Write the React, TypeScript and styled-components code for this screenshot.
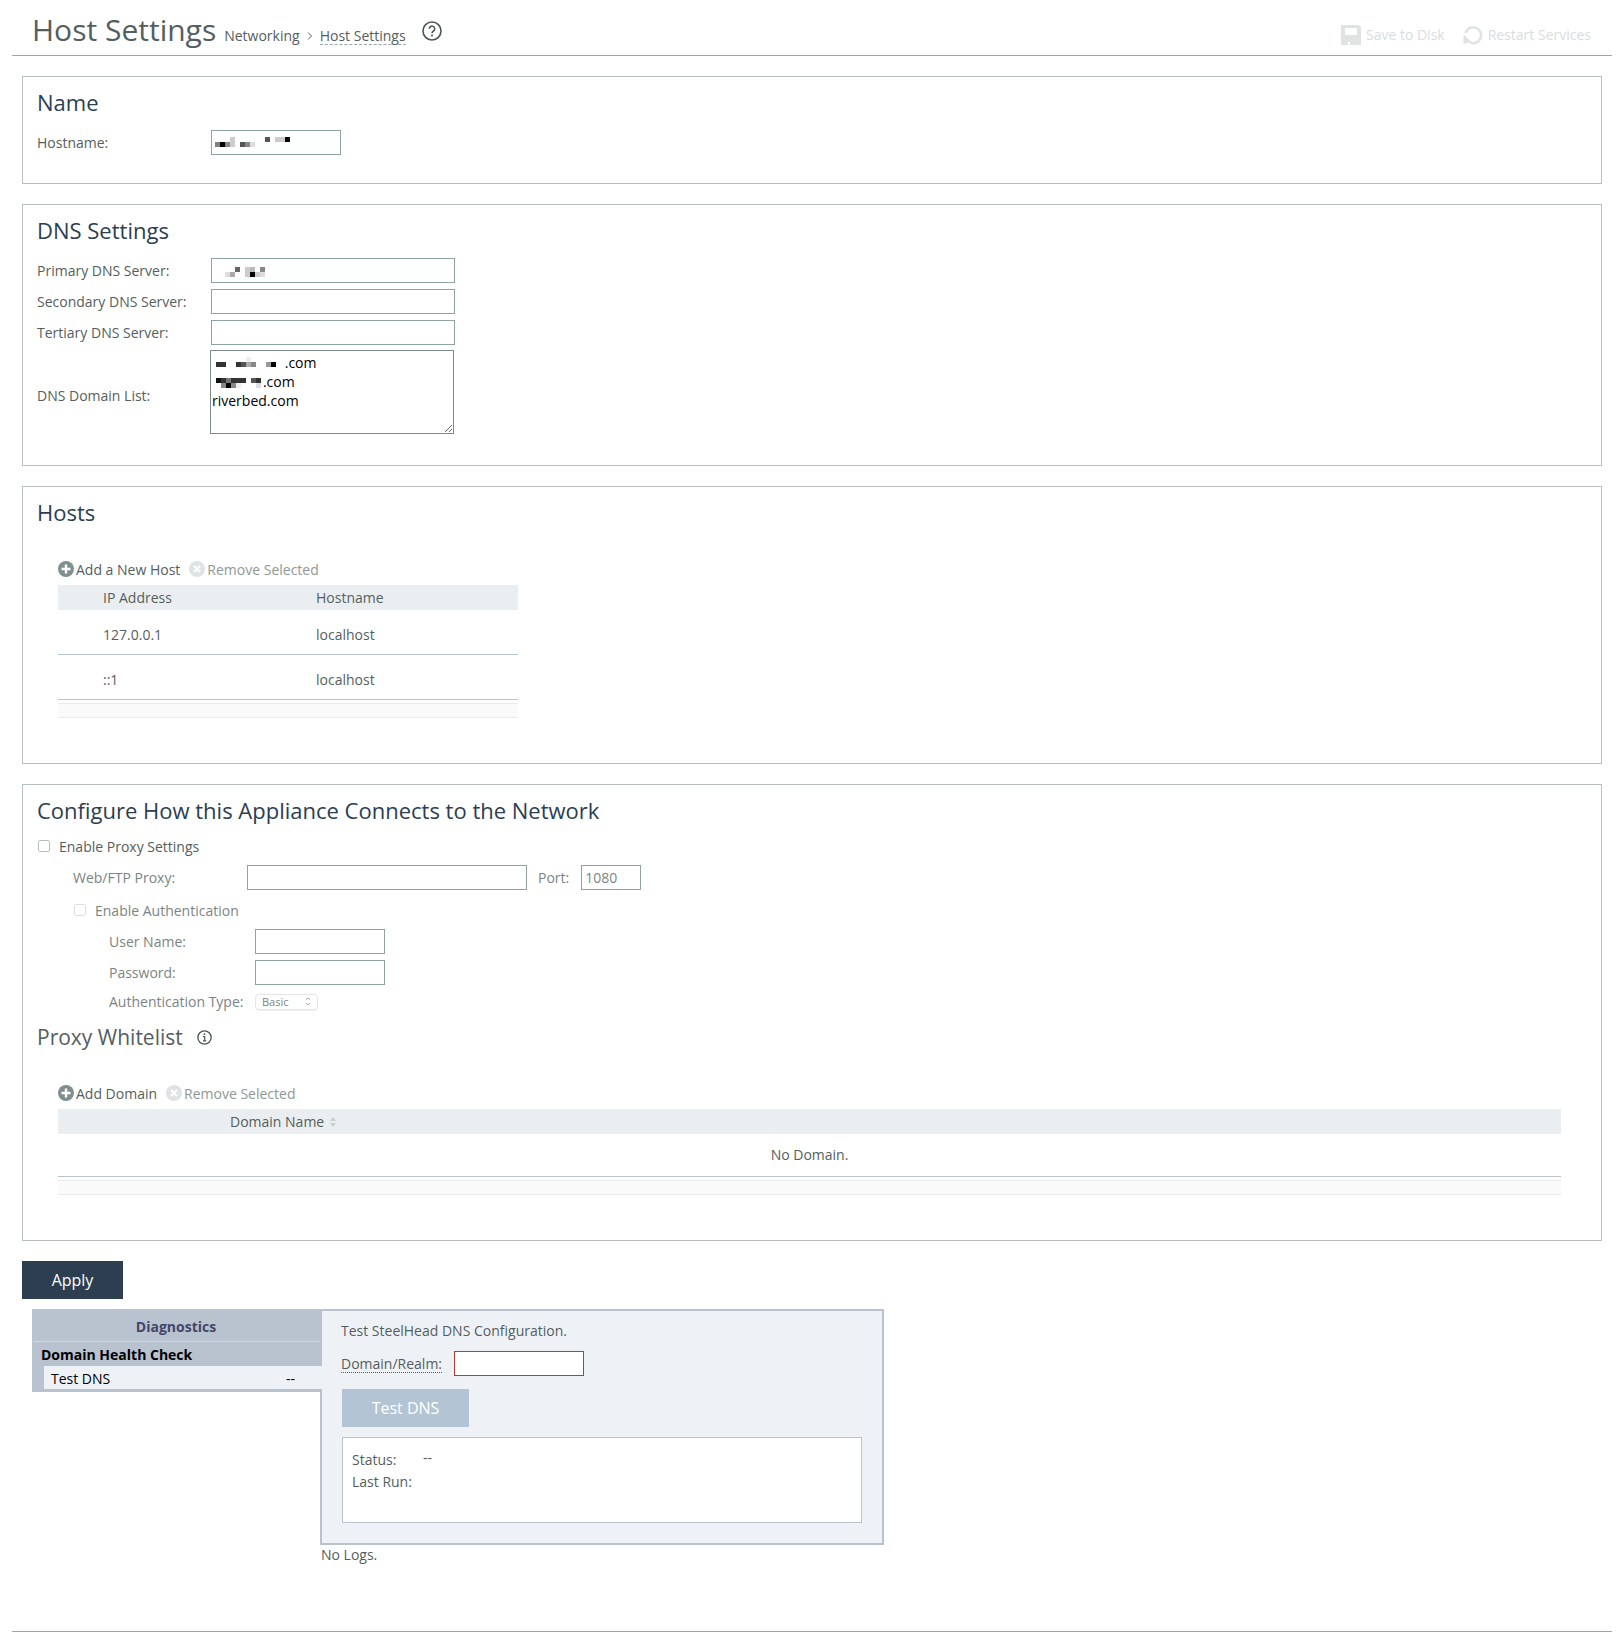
import React from "react";
import styled, { createGlobalStyle } from "styled-components";

const Global = createGlobalStyle`
  html, body { margin: 0; padding: 0; background: #fff; }
  body { font-family: "Open Sans", "Liberation Sans", sans-serif; font-size: 14px; color: #555e5e; }
`;

const Page = styled.div`
  width: 1623px;
  box-sizing: border-box;
  padding: 0 11px 0 12px;
`;
const Header = styled.header`
  display: flex;
  align-items: center;
  height: 55px;
  border-bottom: 1px solid #9aa5a5;
  padding: 0 21px 0 20px;
`;
const Title = styled.h1`
  margin: 5px 0 0;
  font-size: 30px;
  font-weight: 400;
  line-height: 40px;
  color: #555e5e;
`;
const Crumbs = styled.div`
  display: flex;
  align-items: center;
  margin-left: 8px;
  margin-top: 16px;
  font-size: 14px;
  color: #555e5e;
`;
const Sep = styled.span`
  margin: 0 7px;
  display: inline-flex;
`;
const Current = styled.span`
  border-bottom: 1px dashed #9aa5a5;
  line-height: 17px;
  margin-top: 1px;
`;
const Help = styled.span`
  display: inline-flex;
  margin-left: 16px;
  margin-top: 7px;
`;
const Actions = styled.div`
  margin-left: auto;
  display: flex;
  align-items: center;
  gap: 18px;
  margin-top: 14px;
`;
const Action = styled.span`
  display: flex;
  align-items: center;
  gap: 5px;
  color: #d9dddd;
  font-size: 14px;
`;
const Panel = styled.section<{ $bottom: number }>`
  margin: 20px 10px 0;
  border: 1px solid #b8bfc4;
  padding: 11px 14px ${(p) => p.$bottom}px;
`;
const PanelTitle = styled.h2<{ $muted?: boolean }>`
  margin: 0;
  display: flex;
  align-items: center;
  gap: 14px;
  height: 30px;
  box-sizing: border-box;
  padding-bottom: ${(p) => (p.$muted ? 0 : 2)}px;
  font-size: ${(p) => (p.$muted ? 21 : 22)}px;
  font-weight: 400;
  color: ${(p) => (p.$muted ? "#555e5e" : "#2c3e50")};
`;
const Form = styled.div`
  margin-top: 12px;
  display: flex;
  flex-direction: column;
  gap: 6px;
`;
const Row = styled.div<{ $indent?: number }>`
  display: flex;
  align-items: center;
  margin-left: ${(p) => p.$indent ?? 0}px;
`;
const Label = styled.label<{ $width: number; $faded?: boolean; $drop?: number }>`
  width: ${(p) => p.$width}px;
  flex: none;
  color: ${(p) => (p.$faded ? "#7b8484" : "#555e5e")};
  padding-top: ${(p) => p.$drop ?? 0}px;
`;
const Field = styled.div`
  position: relative;
  display: flex;
`;
const Input = styled.input<{ $width: number; $red?: boolean }>`
  width: ${(p) => p.$width}px;
  height: 25px;
  box-sizing: border-box;
  border: 1px solid ${(p) => (p.$red ? "#c0392b" : "#8fa3a3")};
  background: #fff;
  outline: none;
  padding: 0 3px;
  font: 14px "Open Sans", sans-serif;
  color: #7b8484;
  border-radius: 0;
`;
const Area = styled.textarea`
  width: 244px;
  height: 84px;
  margin: -1px 0 0 -1px;
  box-sizing: border-box;
  border: 1px solid #7f8a8a;
  padding: 2px 1px;
  font: 14px/19px "Open Sans", sans-serif;
  color: #000;
  background: #fff;
  outline: none;
  border-radius: 0;
  overflow: hidden;
  white-space: pre;
`;
const Mosaic = styled.svg`
  position: absolute;
  left: 0;
  top: 0;
  pointer-events: none;
`;
const Toolbar = styled.div<{ $top: number }>`
  display: flex;
  gap: 9px;
  margin: ${(p) => p.$top}px 0 0 21px;
  height: 18px;
  padding-bottom: 7px;
  align-items: center;
`;
const Tool = styled.span<{ $off?: boolean }>`
  display: inline-flex;
  align-items: center;
  gap: 2px;
  color: ${(p) => (p.$off ? "#8f9797" : "#555e5e")};
`;
const Table = styled.div<{ $width: number }>`
  width: ${(p) => p.$width}px;
  margin-left: 21px;
`;
const Head = styled.div`
  display: flex;
  align-items: center;
  height: 25px;
  background: #ebeef0;
`;
const Cell = styled.div<{ $width?: number; $left?: number }>`
  box-sizing: border-box;
  width: ${(p) => (p.$width ? p.$width + "px" : "auto")};
  padding-left: ${(p) => p.$left ?? 0}px;
  display: flex;
  align-items: center;
  gap: 6px;
`;
const TableRow = styled.div<{ $height: number }>`
  display: flex;
  align-items: center;
  box-sizing: border-box;
  height: ${(p) => p.$height}px;
  padding-top: 4px;
  border-bottom: 1px solid #b9c2cf;
`;
const Empty = styled(TableRow)`
  justify-content: center;
  padding-top: 0;
  padding-bottom: 2px;
`;
const TableFoot = styled.div`
  margin-top: 3px;
  height: 13px;
  background: #fafafa;
  border-top: 1px solid #e8eaeb;
  border-bottom: 1px solid #e8eaeb;
`;
const CheckRow = styled.label<{ $indent?: number; $faded?: boolean }>`
  display: flex;
  align-items: center;
  gap: 9px;
  height: 18px;
  margin-left: ${(p) => p.$indent ?? 1}px;
  color: ${(p) => (p.$faded ? "#7b8484" : "#555e5e")};
`;
const Check = styled.input.attrs({ type: "checkbox" })<{ $faded?: boolean }>`
  appearance: none;
  margin: 0;
  width: 12px;
  height: 12px;
  box-sizing: border-box;
  border: 1px solid ${(p) => (p.$faded ? "#dde0e2" : "#b8bfc4")};
  border-radius: 2px;
  background: #fff;
`;
const ProxyBlock = styled.div`
  margin-top: 10px;
`;
const Stack = styled.div<{ $top: number; $gap?: number }>`
  display: flex;
  flex-direction: column;
  gap: ${(p) => p.$gap ?? 0}px;
  margin-top: ${(p) => p.$top}px;
`;
const PortLabel = styled.span`
  margin: 0 12px 0 11px;
  color: #7b8484;
`;
const SelectBox = styled.div`
  width: 63px;
  height: 16px;
  box-sizing: border-box;
  border: 1px solid #e3e5e6;
  border-radius: 4px;
  display: flex;
  align-items: center;
  justify-content: space-between;
  padding: 0 6px 0 6px;
  font-size: 11px;
  color: #7b8484;
  box-shadow: 0 1px 1px #f0f0f0;
`;
const ApplyButton = styled.button`
  display: block;
  margin: 20px 0 0 10px;
  width: 101px;
  height: 38px;
  border: 0;
  background: #2c3e50;
  color: #fff;
  font: 16px "Open Sans", sans-serif;
  padding: 0;
`;
const Diagnostics = styled.div`
  display: flex;
  align-items: flex-start;
  margin: 10px 0 0 20px;
`;
const Nav = styled.nav`
  position: relative;
  z-index: 1;
  width: 290px;
  margin-right: -2px;
  box-sizing: border-box;
  background: #b9c2cf;
  padding: 0 0 3px 2px;
  color: #000;
`;
const NavTitle = styled.div`
  height: 33px;
  margin-right: 2px;
  box-sizing: border-box;
  padding: 2px 2px 0 0;
  display: flex;
  align-items: center;
  justify-content: center;
  font-weight: 700;
  color: #44476a;
  border-bottom: 1px solid #d0d6e0;
`;
const NavGroup = styled.div`
  height: 24px;
  padding-left: 7px;
  font-weight: 700;
  display: flex;
  align-items: center;
`;
const NavItem = styled.div`
  margin-left: 10px;
  height: 23px;
  box-sizing: border-box;
  background: #eef1f6;
  display: flex;
  align-items: center;
  justify-content: space-between;
  padding: 2px 27px 0 7px;
`;
const DetailColumn = styled.div`
  width: 564px;
`;
const Detail = styled.div`
  box-sizing: border-box;
  height: 236px;
  border: 2px solid #b9c2cf;
  background: #eef1f6;
  padding: 10px 20px 0 19px;
`;
const Line = styled.div`
  height: 20px;
  line-height: 20px;
`;
const DomainRow = styled.div`
  display: flex;
  align-items: center;
  margin-top: 10px;
`;
const Dotted = styled.span`
  border-bottom: 1px dotted #555e5e;
  line-height: 17px;
  margin-right: 12px;
`;
const TestButton = styled.button`
  display: block;
  margin: 13px 0 0 1px;
  width: 127px;
  height: 38px;
  border: 0;
  padding: 0;
  background: #b3c5d5;
  color: #fff;
  font: 16px "Open Sans", sans-serif;
`;
const ResultBox = styled.div`
  margin: 10px 0 0 1px;
  box-sizing: border-box;
  height: 86px;
  border: 1px solid #b9c2cf;
  background: #fff;
  padding: 12px 9px;
`;
const ResultRow = styled.div`
  display: flex;
  height: 22px;
  line-height: 20px;
`;
const ResultLabel = styled.span`
  width: 71px;
`;
const ResultValue = styled.span`
  margin-top: -2px;
`;
const NoLogs = styled.div`
  height: 20px;
  line-height: 20px;
  padding-left: 1px;
`;
const Foot = styled.div`
  margin-top: 66px;
  border-top: 1px solid #9aa5a5;
`;

type Block = [number, number, string];
const hostBlocks: Block[] = [
  [4, 12, "#808080"], [9, 12, "#000"], [14, 12, "#888"], [19, 12, "#ccc"], [19, 7, "#ccc"],
  [29, 12, "#555"], [34, 12, "#888"], [39, 12, "#ddd"],
  [54, 7, "#555"], [64, 7, "#ccc"], [69, 7, "#ccc"], [74, 7, "#000"],
];
const dnsBlocks: Block[] = [
  [24, 9, "#666"], [34, 9, "#ccc"], [39, 9, "#bbb"], [49, 9, "#888"],
  [14, 14, "#ddd"], [19, 14, "#aaa"], [34, 14, "#ccc"], [39, 14, "#000"], [44, 14, "#ccc"], [49, 14, "#ddd"],
];
const domainBlocks: Block[] = [
  [5, 11, "#333"], [10, 11, "#333"], [25, 11, "#333"], [30, 11, "#555"], [35, 11, "#aaa"], [40, 11, "#888"],
  [35, 6, "#eee"], [55, 11, "#999"], [60, 11, "#000"],
  [5, 27, "#111"], [10, 27, "#333"], [15, 27, "#777"], [20, 27, "#333"], [25, 27, "#333"], [30, 27, "#333"],
  [40, 27, "#555"], [45, 27, "#333"], [10, 32, "#888"], [15, 32, "#000"], [20, 32, "#888"], [25, 32, "#eee"], [45, 32, "#ddd"],
];

const Pixels = ({ blocks, w, h }: { blocks: Block[]; w: number; h: number }) => (
  <Mosaic width={w} height={h} shapeRendering="crispEdges">
    {blocks.map(([x, y, c], i) => (
      <rect key={i} x={x} y={y} width={5} height={5} fill={c} />
    ))}
  </Mosaic>
);

const AddIcon = () => (
  <svg width="16" height="16" viewBox="0 0 16 16">
    <circle cx="8" cy="8" r="8" fill="#7f8f8f" />
    <path d="M8 3.5v9M3.5 8h9" stroke="#fff" strokeWidth="2.4" />
  </svg>
);
const RemoveIcon = () => (
  <svg width="16" height="16" viewBox="0 0 16 16">
    <circle cx="8" cy="8" r="8" fill="#e0e3e3" />
    <path d="M5 5l6 6M11 5l-6 6" stroke="#fff" strokeWidth="2.2" />
  </svg>
);
const SaveIcon = () => (
  <svg width="20" height="20" viewBox="0 0 20 20">
    <path fillRule="evenodd" fill="#dfe3e4" d="M0 0h18l2 2v18H0zM4 3v7h12V3zM7 17v3h2v-3z" />
  </svg>
);
const RestartIcon = () => (
  <svg width="20" height="20" viewBox="0 0 20 20" fill="none">
    <path d="M2.4 8A8 8 0 1 1 7 17.6" stroke="#dfe3e4" strokeWidth="2.6" />
    <path d="M.5 9.5L8.5 17 .5 19z" fill="#dfe3e4" />
  </svg>
);
const HelpIcon = () => (
  <svg width="20" height="20" viewBox="0 0 20 20" fill="none" stroke="#4c5555">
    <circle cx="10" cy="10" r="9" strokeWidth="1.6" />
    <path d="M7.3 7.8a2.7 2.7 0 1 1 4.2 2.2c-1 .7-1.5 1.1-1.5 2.3" strokeWidth="1.6" />
    <circle cx="10" cy="14.6" r="1" fill="#4c5555" stroke="none" />
  </svg>
);
const InfoIcon = () => (
  <svg width="15" height="15" viewBox="0 0 15 15" fill="none" stroke="#4c5555">
    <circle cx="7.5" cy="7.5" r="6.6" strokeWidth="1.3" />
    <path d="M6 6.6h1.7v4M6 10.8h3.2" strokeWidth="1.2" />
    <circle cx="7.4" cy="4.2" r=".9" fill="#4c5555" stroke="none" />
  </svg>
);
const Chevron = () => (
  <svg width="6" height="10" viewBox="0 0 6 10" fill="none">
    <path d="M3 0L6 4H0z M3 10L0 6h6z" fill="#c9cfd0" />
  </svg>
);
const UpDown = () => (
  <svg width="6" height="9" viewBox="0 0 6 9" fill="none" stroke="#8f9797" strokeWidth="0.8">
    <path d="M.8 3L3 1l2.2 2M.8 6L3 8l2.2-2" />
  </svg>
);
const CrumbArrow = () => (
  <svg width="6" height="10" viewBox="0 0 6 10" fill="none" stroke="#555e5e" strokeWidth="1">
    <path d="M1 1.5L4.5 5 1 8.5" />
  </svg>
);

export default function App() {
  return (
    <Page>
      <Global />
      <Header>
        <Title>Host Settings</Title>
        <Crumbs>
          <span>Networking</span>
          <Sep><CrumbArrow /></Sep>
          <Current>Host Settings</Current>
        </Crumbs>
        <Help><HelpIcon /></Help>
        <Actions>
          <Action><SaveIcon />Save to Disk</Action>
          <Action><RestartIcon />Restart Services</Action>
        </Actions>
      </Header>

      <Panel $bottom={28}>
        <PanelTitle>Name</PanelTitle>
        <Form>
          <Row>
            <Label $width={174}>Hostname:</Label>
            <Field>
              <Input $width={130} />
              <Pixels blocks={hostBlocks} w={130} h={25} />
            </Field>
          </Row>
        </Form>
      </Panel>

      <Panel $bottom={31}>
        <PanelTitle>DNS Settings</PanelTitle>
        <Form>
          <Row>
            <Label $width={174}>Primary DNS Server:</Label>
            <Field>
              <Input $width={244} />
              <Pixels blocks={dnsBlocks} w={244} h={25} />
            </Field>
          </Row>
          <Row>
            <Label $width={174}>Secondary DNS Server:</Label>
            <Input $width={244} />
          </Row>
          <Row>
            <Label $width={174}>Tertiary DNS Server:</Label>
            <Input $width={244} />
          </Row>
          <Row>
            <Label $width={174} $drop={6}>DNS Domain List:</Label>
            <Field>
              <Area
                readOnly
                value={"                    .com\n              .com\nriverbed.com"}
              />
              <Pixels blocks={domainBlocks} w={100} h={60} />
            </Field>
          </Row>
        </Form>
      </Panel>

      <Panel $bottom={45}>
        <PanelTitle>Hosts</PanelTitle>
        <Toolbar $top={32}>
          <Tool><AddIcon />Add a New Host</Tool>
          <Tool $off><RemoveIcon />Remove Selected</Tool>
        </Toolbar>
        <Table $width={460}>
          <Head>
            <Cell $width={258} $left={45}>IP Address</Cell>
            <Cell>Hostname</Cell>
          </Head>
          <TableRow $height={45}>
            <Cell $width={258} $left={45}>127.0.0.1</Cell>
            <Cell>localhost</Cell>
          </TableRow>
          <TableRow $height={45}>
            <Cell $width={258} $left={45}>::1</Cell>
            <Cell>localhost</Cell>
          </TableRow>
          <TableFoot />
        </Table>
      </Panel>

      <Panel $bottom={45}>
        <PanelTitle>Configure How this Appliance Connects to the Network</PanelTitle>
        <Stack $top={11}>
          <CheckRow>
            <Check />
            Enable Proxy Settings
          </CheckRow>
        </Stack>
        <ProxyBlock>
          <Row $indent={36}>
            <Label $width={174} $faded>Web/FTP Proxy:</Label>
            <Input $width={280} />
            <PortLabel>Port:</PortLabel>
            <Input $width={60} defaultValue="1080" />
          </Row>
          <Stack $top={11}>
            <CheckRow $indent={37} $faded>
              <Check $faded />
              Enable Authentication
            </CheckRow>
          </Stack>
          <Stack $top={10} $gap={6}>
            <Row $indent={72}>
              <Label $width={146} $faded>User Name:</Label>
              <Input $width={130} />
            </Row>
            <Row $indent={72}>
              <Label $width={146} $faded>Password:</Label>
              <Input $width={130} />
            </Row>
          </Stack>
          <Stack $top={7}>
            <Row $indent={72}>
              <Label $width={146} $faded>Authentication Type:</Label>
              <SelectBox>Basic<UpDown /></SelectBox>
            </Row>
          </Stack>
        </ProxyBlock>
        <Stack $top={11}>
          <PanelTitle $muted>Proxy Whitelist <InfoIcon /></PanelTitle>
        </Stack>
        <Toolbar $top={32}>
          <Tool><AddIcon />Add Domain</Tool>
          <Tool $off><RemoveIcon />Remove Selected</Tool>
        </Toolbar>
        <Table $width={1503}>
          <Head>
            <Cell $left={172}>Domain Name <Chevron /></Cell>
          </Head>
          <Empty $height={43}>No Domain.</Empty>
          <TableFoot />
        </Table>
      </Panel>

      <ApplyButton>Apply</ApplyButton>

      <Diagnostics>
        <Nav>
          <NavTitle>Diagnostics</NavTitle>
          <NavGroup>Domain Health Check</NavGroup>
          <NavItem><span>Test DNS</span><span>--</span></NavItem>
        </Nav>
        <DetailColumn>
          <Detail>
            <Line>Test SteelHead DNS Configuration.</Line>
            <DomainRow>
              <Dotted>Domain/Realm:</Dotted>
              <Input $width={130} $red />
            </DomainRow>
            <TestButton>Test DNS</TestButton>
            <ResultBox>
              <ResultRow><ResultLabel>Status:</ResultLabel><ResultValue>--</ResultValue></ResultRow>
              <ResultRow><ResultLabel>Last Run:</ResultLabel></ResultRow>
            </ResultBox>
          </Detail>
          <NoLogs>No Logs.</NoLogs>
        </DetailColumn>
      </Diagnostics>
      <Foot />
    </Page>
  );
}
